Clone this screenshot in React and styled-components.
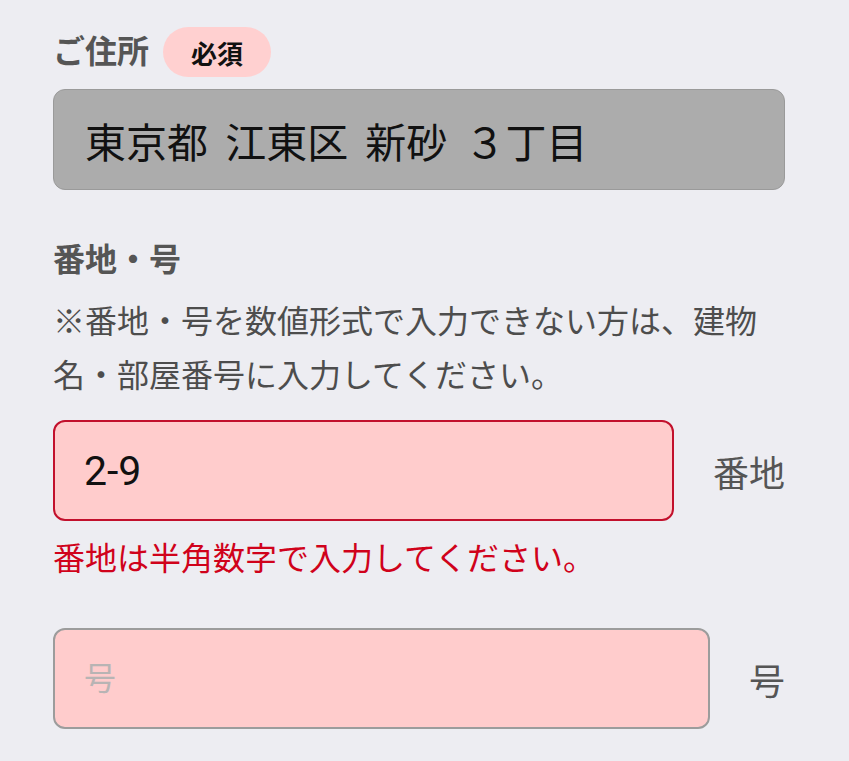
import React from "react";
import styled, { createGlobalStyle } from "styled-components";

const Global = createGlobalStyle`
  html, body {
    margin: 0;
    padding: 0;
    background: #ededf2;
  }
  body {
    font-family: Roboto, "Noto Sans CJK JP", "Noto Sans", sans-serif;
    color: #4d4d4d;
  }
  * { box-sizing: border-box; }
`;

const Page = styled.div`
  padding: 27px 64px 32px 53px;
  display: flex;
  flex-direction: column;
`;

const LabelRow = styled.div`
  display: flex;
  align-items: center;
  gap: 14px;
  height: 50px;
`;

const FieldLabel = styled.div`
  font-size: 32px;
  font-weight: 700;
  color: #555;
  line-height: 40px;
  margin-top: ${(p) => p.$mt || 0}px;
`;

const Badge = styled.span`
  display: inline-flex;
  align-items: center;
  justify-content: center;
  height: 50px;
  padding: 0 28px;
  border-radius: 25px;
  background: #ffd0d0;
  color: #111;
  font-size: 26px;
  font-weight: 700;
`;

const AddressBox = styled.div`
  margin-top: 12px;
  height: 101px;
  border: 1px solid #9a9a9a;
  border-radius: 12px;
  background: #acacac;
  color: #111;
  font-size: 41px;
  word-spacing: 7px;
  display: flex;
  align-items: center;
  padding-left: 31px;
  white-space: pre;
`;

const Note = styled.p`
  margin: 15px 0 0;
  font-size: 32px;
  line-height: 54px;
  color: #4d4d4d;
`;

const InputRow = styled.div`
  display: flex;
  align-items: center;
  gap: 39px;
  margin-top: ${(p) => p.$mt}px;
`;

const TextInput = styled.input`
  flex: 1;
  min-width: 0;
  height: 101px;
  border-radius: 12px;
  border: 2px solid ${(p) => (p.$error ? "#c2102c" : "#9c9c9c")};
  background: #ffcccc;
  color: #111;
  font-family: Roboto, "Noto Sans CJK JP", sans-serif;
  font-size: ${(p) => (p.value ? 41 : 32)}px;
  padding: 0 0 0 29px;
  outline: none;
  &::placeholder {
    color: #b8b4b4;
    font-size: 32px;
  }
`;

const UnitLabel = styled.span`
  font-size: 36px;
  color: #555;
  white-space: nowrap;
`;

const ErrorText = styled.div`
  margin-top: 18px;
  font-size: 32px;
  line-height: 40px;
  color: #d0021b;
`;

export default function App() {
  return (
    <>
      <Global />
      <Page>
        <LabelRow>
          <FieldLabel>ご住所</FieldLabel>
          <Badge>必須</Badge>
        </LabelRow>
        <AddressBox>東京都 江東区 新砂 ３丁目</AddressBox>

        <FieldLabel $mt={50}>番地・号</FieldLabel>
        <Note>※番地・号を数値形式で入力できない方は、建物名・部屋番号に入力してください。</Note>

        <InputRow $mt={17}>
          <TextInput $error value="2-9" readOnly />
          <UnitLabel>番地</UnitLabel>
        </InputRow>
        <ErrorText>番地は半角数字で入力してください。</ErrorText>

        <InputRow $mt={49}>
          <TextInput placeholder="号" />
          <UnitLabel>号</UnitLabel>
        </InputRow>
      </Page>
    </>
  );
}
